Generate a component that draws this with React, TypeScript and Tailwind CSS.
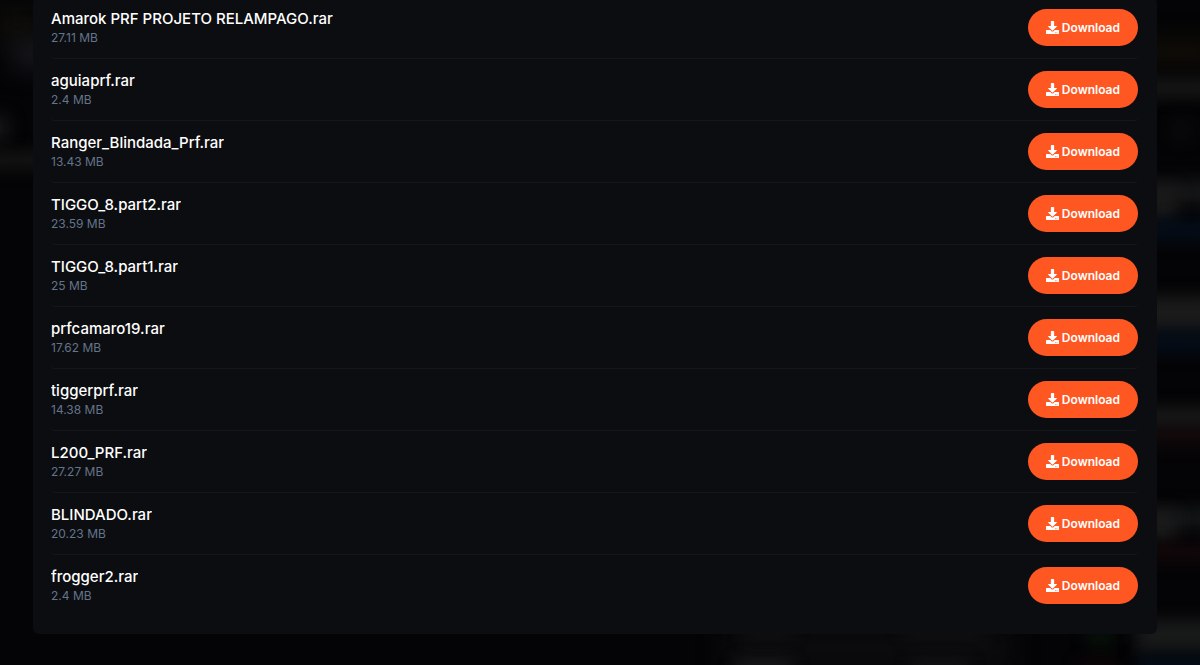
import React from 'react';
import { FaDownload } from 'react-icons/fa';

const files = [
  { name: 'Amarok PRF PROJETO RELAMPAGO.rar', size: '27.11 MB' },
  { name: 'aguiaprf.rar', size: '2.4 MB' },
  { name: 'Ranger_Blindada_Prf.rar', size: '13.43 MB' },
  { name: 'TIGGO_8.part2.rar', size: '23.59 MB' },
  { name: 'TIGGO_8.part1.rar', size: '25 MB' },
  { name: 'prfcamaro19.rar', size: '17.62 MB' },
  { name: 'tiggerprf.rar', size: '14.38 MB' },
  { name: 'L200_PRF.rar', size: '27.27 MB' },
  { name: 'BLINDADO.rar', size: '20.23 MB' },
  { name: 'frogger2.rar', size: '2.4 MB' },
];

// Dimmed, blurred shapes that show around the modal
const Backdrop = () => (
  <div aria-hidden="true" className="absolute inset-0 overflow-hidden">
    <div className="absolute -left-2 top-2 w-12 h-8 bg-[#0e0d09] blur-md" />
    <div className="absolute left-3 top-10 w-10 h-7 bg-[#18191d] blur-md" />
    <div className="absolute -left-4 top-29 w-6 h-6 bg-[#171717] blur-sm" />
    <div className="absolute -left-4 top-38 w-16 h-4 bg-[#151515] blur-sm" />

    <div className="absolute -right-4 top-10 w-20 h-6 bg-[#120e07] blur-md" />
    <div className="absolute -right-4 top-20 w-20 h-4 bg-[#1a1a1a] blur-sm" />
    <div className="absolute right-2 top-30 w-5 h-5 bg-[#0a0a0b] blur-sm" />
    <div className="absolute -right-4 top-45 w-20 h-6 bg-[#161717] blur-sm" />
    <div className="absolute right-6 top-47 w-8 h-8 bg-[#1a1a1a] blur-sm" />
    <div className="absolute -right-4 top-55 w-20 h-5 bg-[#050e1a] blur-sm" />
    <div className="absolute -right-4 top-74 w-20 h-9 bg-[#1b1b1b] blur-sm" />
    <div className="absolute -right-4 top-83 w-20 h-5 bg-[#050e1a] blur-sm" />
    <div className="absolute -right-4 top-102 w-20 h-5 bg-[#1b1b1b] blur-sm" />
    <div className="absolute -right-4 top-107 w-20 h-4 bg-[#150a0b] blur-sm" />
    <div className="absolute -right-4 top-127 w-20 h-5 bg-[#151717] blur-sm" />
    <div className="absolute right-6 top-128 w-8 h-7 bg-[#1b1b1b] blur-sm" />
    <div className="absolute -right-4 top-136 w-20 h-4 bg-[#140809] blur-sm" />
    <div className="absolute -right-4 top-155 w-20 h-8 bg-[#191a1a] blur-sm" />
    <div className="absolute -right-4 -bottom-3 w-20 h-5 bg-[#050e1a] blur-sm" />

    <div className="absolute right-47 -bottom-2 w-72 h-12 bg-[#0b0b0d] blur-md" />
    <div className="absolute right-102 -bottom-2 w-14 h-3 bg-[#1e1e20] blur-sm" />
    <div className="absolute right-102 bottom-7 w-12 h-3 bg-[#131315] blur-sm" />
    <div className="absolute right-54 bottom-7 w-20 h-3 bg-[#131315] blur-sm" />
    <div className="absolute right-58 -bottom-2 w-14 h-3 bg-[#161618] blur-sm" />
    <div className="absolute right-22 bottom-5 w-6 h-4 bg-[#08150b] blur-sm" />
    <div className="absolute right-20 -bottom-2 w-10 h-3 bg-[#140708] blur-sm" />
  </div>
);

const FileRow = ({ name, size }: { name: string; size: string }) => (
  <li className="flex items-center justify-between py-3 rounded border-b border-[#15171a] last:border-b-0">
    <div className="min-w-0">
      <p className="text-[15px] leading-5 font-medium text-white truncate">{name}</p>
      <p className="text-xs leading-[17px] text-[#64748b]">{size}</p>
    </div>
    <button
      type="button"
      className="flex items-center gap-[3px] shrink-0 px-[18px] py-2 rounded-full bg-[#ff5722] text-xs leading-[21px] font-semibold text-white cursor-pointer hover:bg-[#f4511e]"
    >
      <FaDownload size={13} />
      Download
    </button>
  </li>
);

const App = () => {
  return (
    <div className="relative min-h-screen overflow-hidden bg-[#040406] font-['Inter',sans-serif]">
      <Backdrop />
      <main className="relative -mt-[3px] ml-[33px] mr-[43px] pl-[18px] pr-[19px] pb-[18px] rounded-md bg-[#0c0d10]">
        <ul className="-mt-px">
          {files.map((file) => (
            <FileRow key={file.name} name={file.name} size={file.size} />
          ))}
        </ul>
      </main>
    </div>
  );
};

export default App;
